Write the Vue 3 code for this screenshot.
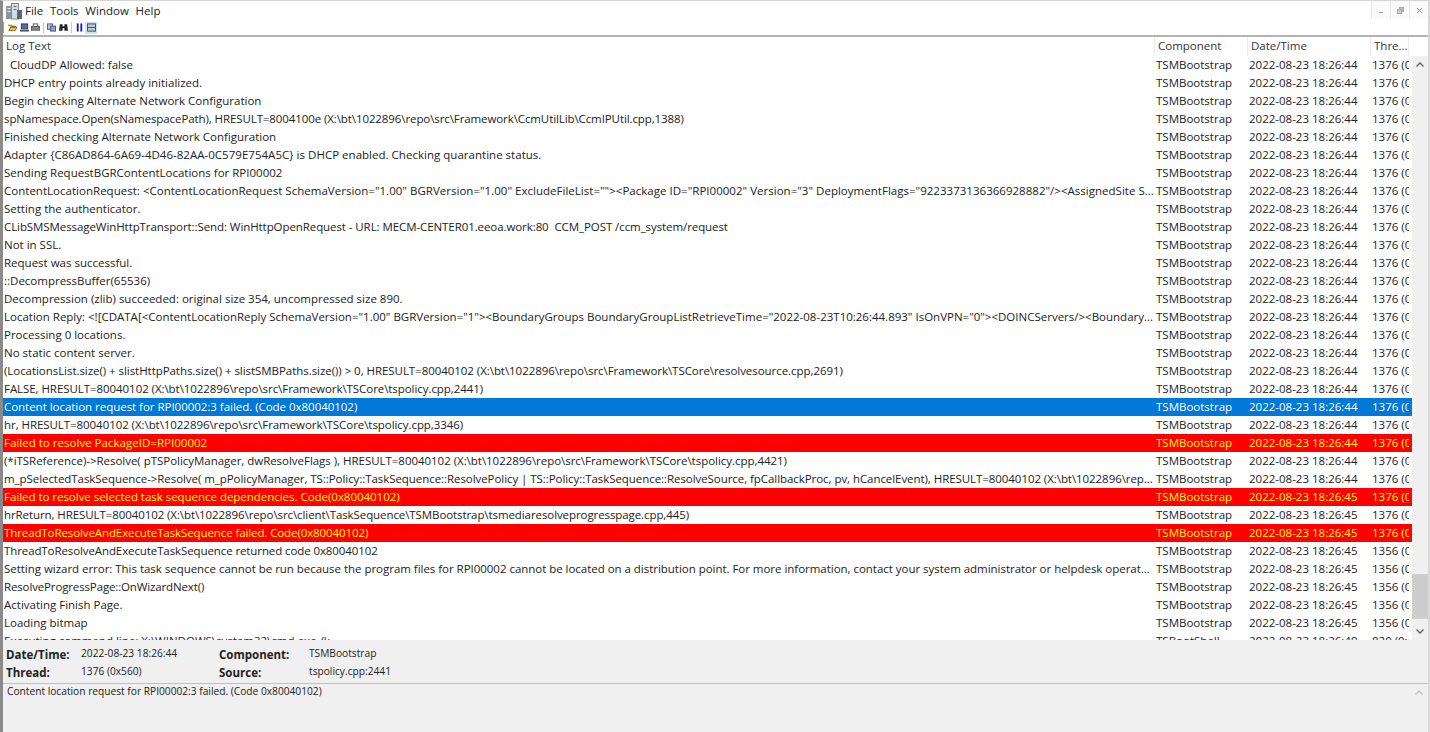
<script setup>
const T4 = '2022-08-23 18:26:44'
const T5 = '2022-08-23 18:26:45'
const row = (text, time, thread, kind = '', tracking = 0, comp = 'TSMBootstrap') => ({ text, time, thread, kind, tracking, comp })
const rows = [
  row('  CloudDP Allowed: false', T4, '1376 (0x560)'),
  row('DHCP entry points already initialized.', T4, '1376 (0x560)'),
  row('Begin checking Alternate Network Configuration', T4, '1376 (0x560)'),
  row('spNamespace.Open(sNamespacePath), HRESULT=8004100e (X:\\bt\\1022896\\repo\\src\\Framework\\CcmUtilLib\\CcmIPUtil.cpp,1388)', T4, '1376 (0x560)', '', -0.095),
  row('Finished checking Alternate Network Configuration', T4, '1376 (0x560)'),
  row('Adapter {C86AD864-6A69-4D46-82AA-0C579E754A5C} is DHCP enabled. Checking quarantine status.', T4, '1376 (0x560)', '', 0.02),
  row('Sending RequestBGRContentLocations for RPI00002', T4, '1376 (0x560)'),
  row('ContentLocationRequest: <ContentLocationRequest SchemaVersion="1.00" BGRVersion="1.00" ExcludeFileList=""><Package ID="RPI00002" Version="3" DeploymentFlags="9223373136366928882"/><AssignedSite S...', T4, '1376 (0x560)', '', 0.02),
  row('Setting the authenticator.', T4, '1376 (0x560)'),
  row('CLibSMSMessageWinHttpTransport::Send: WinHttpOpenRequest - URL: MECM-CENTER01.eeoa.work:80  CCM_POST /ccm_system/request', T4, '1376 (0x560)', '', -0.08),
  row('Not in SSL.', T4, '1376 (0x560)'),
  row('Request was successful.', T4, '1376 (0x560)'),
  row('::DecompressBuffer(65536)', T4, '1376 (0x560)'),
  row('Decompression (zlib) succeeded: original size 354, uncompressed size 890.', T4, '1376 (0x560)'),
  row('Location Reply: <![CDATA[<ContentLocationReply SchemaVersion="1.00" BGRVersion="1"><BoundaryGroups BoundaryGroupListRetrieveTime="2022-08-23T10:26:44.893" IsOnVPN="0"><DOINCServers/><Boundary...', T4, '1376 (0x560)'),
  row('Processing 0 locations.', T4, '1376 (0x560)'),
  row('No static content server.', T4, '1376 (0x560)'),
  row('(LocationsList.size() + slistHttpPaths.size() + slistSMBPaths.size()) > 0, HRESULT=80040102 (X:\\bt\\1022896\\repo\\src\\Framework\\TSCore\\resolvesource.cpp,2691)', T4, '1376 (0x560)', '', -0.05),
  row('FALSE, HRESULT=80040102 (X:\\bt\\1022896\\repo\\src\\Framework\\TSCore\\tspolicy.cpp,2441)', T4, '1376 (0x560)', '', -0.06),
  row('Content location request for RPI00002:3 failed. (Code 0x80040102)', T4, '1376 (0x560)', 'selected', -0.03),
  row('hr, HRESULT=80040102 (X:\\bt\\1022896\\repo\\src\\Framework\\TSCore\\tspolicy.cpp,3346)', T4, '1376 (0x560)', '', -0.06),
  row('Failed to resolve PackageID=RPI00002', T4, '1376 (0x560)', 'error', 0.02),
  row('(*iTSReference)->Resolve( pTSPolicyManager, dwResolveFlags ), HRESULT=80040102 (X:\\bt\\1022896\\repo\\src\\Framework\\TSCore\\tspolicy.cpp,4421)', T4, '1376 (0x560)', '', -0.03),
  row('m_pSelectedTaskSequence->Resolve( m_pPolicyManager, TS::Policy::TaskSequence::ResolvePolicy | TS::Policy::TaskSequence::ResolveSource, fpCallbackProc, pv, hCancelEvent), HRESULT=80040102 (X:\\bt\\1022896\\rep...', T4, '1376 (0x560)', '', -0.06),
  row('Failed to resolve selected task sequence dependencies. Code(0x80040102)', T5, '1376 (0x560)', 'error', -0.03),
  row('hrReturn, HRESULT=80040102 (X:\\bt\\1022896\\repo\\src\\client\\TaskSequence\\TSMBootstrap\\tsmediaresolveprogresspage.cpp,445)', T5, '1376 (0x560)', '', -0.085),
  row('ThreadToResolveAndExecuteTaskSequence failed. Code(0x80040102)', T5, '1376 (0x560)', 'error', -0.1),
  row('ThreadToResolveAndExecuteTaskSequence returned code 0x80040102', T5, '1356 (0x54C)', '', -0.1),
  row('Setting wizard error: This task sequence cannot be run because the program files for RPI00002 cannot be located on a distribution point. For more information, contact your system administrator or helpdesk operat...', T5, '1356 (0x54C)', '', -0.03),
  row('ResolveProgressPage::OnWizardNext()', T5, '1356 (0x54C)', '', -0.14),
  row('Activating Finish Page.', T5, '1356 (0x54C)'),
  row('Loading bitmap', T5, '1356 (0x54C)'),
  row('Executing command line: X:\\WINDOWS\\system32\\cmd.exe /k', '2022-08-23 18:26:49', '820 (0x334)', '', 0, 'TSBootShell'),
]
</script>

<template>
  <div class="app">
    <div class="topbar">
      <svg class="appicon" width="18" height="18" viewBox="0 0 18 18">
        <rect x="1" y="4" width="6" height="13" fill="#8d98a3" />
        <rect x="6.500" y="1.500" width="7" height="15.500" fill="#d6dce1" stroke="#7d8892" stroke-width="1" />
        <rect x="2.500" y="6" width="3" height="1" fill="#e8edf0" />
        <rect x="2.500" y="9" width="3" height="1" fill="#e8edf0" />
        <rect x="8.500" y="4" width="3" height="1" fill="#5d6a75" />
        <rect x="8.500" y="7" width="3" height="1" fill="#5d6a75" />
        <rect x="12" y="8" width="5" height="9" fill="#5a6671" />
      </svg>
      <nav class="menu">
        <span>File</span><span>Tools</span><span>Window</span><span>Help</span>
      </nav>
      <div class="winbtns">
        <span class="winbtn"><svg width="7" height="7" viewBox="0 0 7 7"><rect x="1" y="5" width="4" height="1" fill="#999" /></svg></span>
        <span class="winbtn"><svg width="7" height="7" viewBox="0 0 7 7"><rect x="2.500" y="0.500" width="4" height="4" fill="#bbb" stroke="#aaa" /><rect x="0.500" y="2.500" width="4" height="4" fill="#ccc" stroke="#aaa" /></svg></span>
        <span class="winbtn"><svg width="7" height="7" viewBox="0 0 7 7"><path d="M1 1l5 5M6 1l-5 5" stroke="#999" stroke-width="1" /></svg></span>
      </div>
    </div>
    <div class="toolbar">
      <span class="grip"></span>
      <svg class="tool" viewBox="0 0 10 9"><path d="M0 2h4l1 1h3v1H3L1 8h7l2-4H3" fill="#e8c84a" stroke="#5d4a10" stroke-width=".8" /></svg>
      <svg class="tool" viewBox="0 0 10 9"><rect x="1.500" y="0.500" width="7" height="5.500" fill="#5b6f9e" stroke="#2c3550" /><rect x="0" y="7" width="10" height="2" fill="#555" /></svg>
      <svg class="tool" viewBox="0 0 10 9"><rect x="2.500" y="0.500" width="5" height="3" fill="#fff" stroke="#555" /><rect x="0.500" y="3.500" width="9" height="4" fill="#888" stroke="#555" /></svg>
      <span class="sep"></span>
      <svg class="tool" viewBox="0 0 10 9"><rect x="0.500" y="0.500" width="5.500" height="6" fill="#b8c4d8" stroke="#556" /><rect x="4" y="3" width="5.500" height="5.500" fill="#8fa3c8" stroke="#3f4f80" /></svg>
      <svg class="tool" viewBox="0 0 10 9"><path d="M1 1h3v2h2V1h3l1 7H6V5H4v3H0z" fill="#222" /></svg>
      <span class="sep"></span>
      <svg class="tool" viewBox="0 0 10 9"><rect x="2" y="0" width="2" height="9" fill="#0a1fb0" /><rect x="6" y="0" width="2" height="9" fill="#0a1fb0" /></svg>
      <span class="active">
        <svg class="tool" viewBox="0 0 10 9"><rect x="0.500" y="0.500" width="9" height="8" fill="#bcc6d4" stroke="#3b4a66" /><rect x="1" y="4" width="8" height="1" fill="#3b4a66" /></svg>
      </span>
    </div>
    <div class="logarea">
      <div class="tablewrap">
        <div class="header grid">
          <div class="h first">Log Text</div>
          <div class="h">Component</div>
          <div class="h">Date/Time</div>
          <div class="h">Thre...</div>
        </div>
        <div class="rows">
          <div v-for="(r, i) in rows" :key="i" class="row grid" :class="r.kind">
            <div class="c first" :style="{ letterSpacing: r.tracking + 'px' }">{{ r.text }}</div>
            <div class="c">{{ r.comp }}</div>
            <div class="c">{{ r.time }}</div>
            <div class="c">{{ r.thread }}</div>
          </div>
        </div>
      </div>
      <div class="scroll">
        <svg class="arrow" width="16" height="18" viewBox="0 0 16 18"><path d="M4.500 10.500L8 7l3.500 3.500" fill="none" stroke="#606060" stroke-width="1.300" /></svg>
        <div class="track"><div class="thumb"></div></div>
        <svg class="arrow" width="16" height="18" viewBox="0 0 16 18"><path d="M4.500 7.500L8 11l3.500-3.500" fill="none" stroke="#606060" stroke-width="1.300" /></svg>
      </div>
    </div>
    <div class="details">
      <div class="dgrid">
        <b>Date/Time:</b><span>2022-08-23 18:26:44</span>
        <b>Component:</b><span>TSMBootstrap</span>
        <b>Thread:</b><span>1376 (0x560)</span>
        <b>Source:</b><span>tspolicy.cpp:2441</span>
      </div>
    </div>
    <div class="message">
      <div class="msgtext">Content location request for RPI00002:3 failed. (Code 0x80040102)</div>
      <div class="msgscroll">
        <svg width="16" height="18" viewBox="0 0 16 18"><path d="M4.500 10.500L8 7l3.500 3.500" fill="none" stroke="#c4c4c4" stroke-width="1.300" /></svg>
      </div>
    </div>
  </div>
</template>

<style>
html, body { margin: 0; background: #fff; overflow: hidden; }
</style>

<style scoped>
.app {
  width: 1430px;
  height: 732px;
  display: flex;
  flex-direction: column;
  overflow: hidden;
  font-family: "Open Sans", "Noto Sans", sans-serif;
  font-size: 11.500px;
  color: #222;
  background: #fff;
  border-top: 1px solid #d4d4d4;
  border-left: 3px solid #8a8a8a;
  border-right: 2px solid #d8d8d8;
  box-sizing: border-box;
}
.topbar {
  height: 19px;
  flex: none;
  display: flex;
  align-items: center;
  margin-left: -1px;
  padding-left: 3px;
}
.appicon { flex: none; }
.menu {
  display: flex;
  gap: 6.800px;
  margin-left: 2px;
  font-size: 11.500px;
}
.winbtns { margin-left: auto; display: flex; height: 18px; align-self: flex-start; }
.winbtn {
  width: 18px;
  height: 18px;
  display: flex;
  align-items: center;
  justify-content: center;
  background: #fafafa;
  border-left: 1px solid #e8e8e8;
}
.toolbar {
  height: 15px;
  flex: none;
  display: flex;
  align-items: center;
  gap: 2.500px;
  padding-left: 1px;
  border-bottom: 2px solid #b4b4b4;
  margin-left: -1px;
}
.grip { width: 1px; height: 11px; background: #a0a0a0; margin-right: 1.500px; }
.tool { width: 9px; height: 9px; flex: none; }
.sep { width: 1px; height: 11px; background: #c8c8c8; margin: 0 0.500px; }
.active {
  display: flex;
  align-items: center;
  justify-content: center;
  width: 12px;
  height: 12px;
  margin-left: -1px;
  background: #cce4f7;
}
.logarea {
  flex: 1;
  display: flex;
  min-height: 0;
  overflow: hidden;
}
.tablewrap { width: 1409px; flex: none; overflow: hidden; }
.grid {
  display: grid;
  grid-template-columns: 1152px 93px 123px 38px;
}
.header { height: 19px; color: #333; }
.h {
  padding-left: 3px;
  line-height: 18px;
  border-right: 1px solid #ececec;
}
.row { height: 18px; line-height: 18px; white-space: pre; }
.c { overflow: hidden; padding-left: 1px; }
.c.first { padding-left: 1px; }
.row.selected { background: #0078d7; color: #fff; }
.row.error { background: #ff0000; color: #ffff00; }
.scroll {
  width: 16px;
  flex: none;
  margin-top: 19px;
  background: #f0f0f0;
  display: flex;
  flex-direction: column;
}
.arrow { display: block; flex: none; }
.track { flex: 1; display: flex; flex-direction: column; justify-content: flex-end; }
.thumb { height: 45px; background: #cdcdcd; margin-bottom: 3px; }
.details {
  height: 44px;
  flex: none;
  background: #f0f0f0;
  border-bottom: 1px solid #c0c0c0;
  box-sizing: border-box;
  padding: 5px 0 0 3px;
}
.dgrid {
  display: grid;
  grid-template-columns: 75px 138px 90px 1fr;
  grid-auto-rows: 18px;
  line-height: 16px;
  font-size: 10.200px;
}
.dgrid b { font-weight: 700; font-size: 11.500px; line-height: 20px; }
.message {
  height: 48px;
  flex: none;
  display: flex;
  background: #f0f0f0;
  justify-content: space-between;
}
.msgtext { padding: 0 0 0 4px; font-size: 10.200px; line-height: 15px; }
.msgscroll { width: 17px; margin-right: 0; }
</style>
